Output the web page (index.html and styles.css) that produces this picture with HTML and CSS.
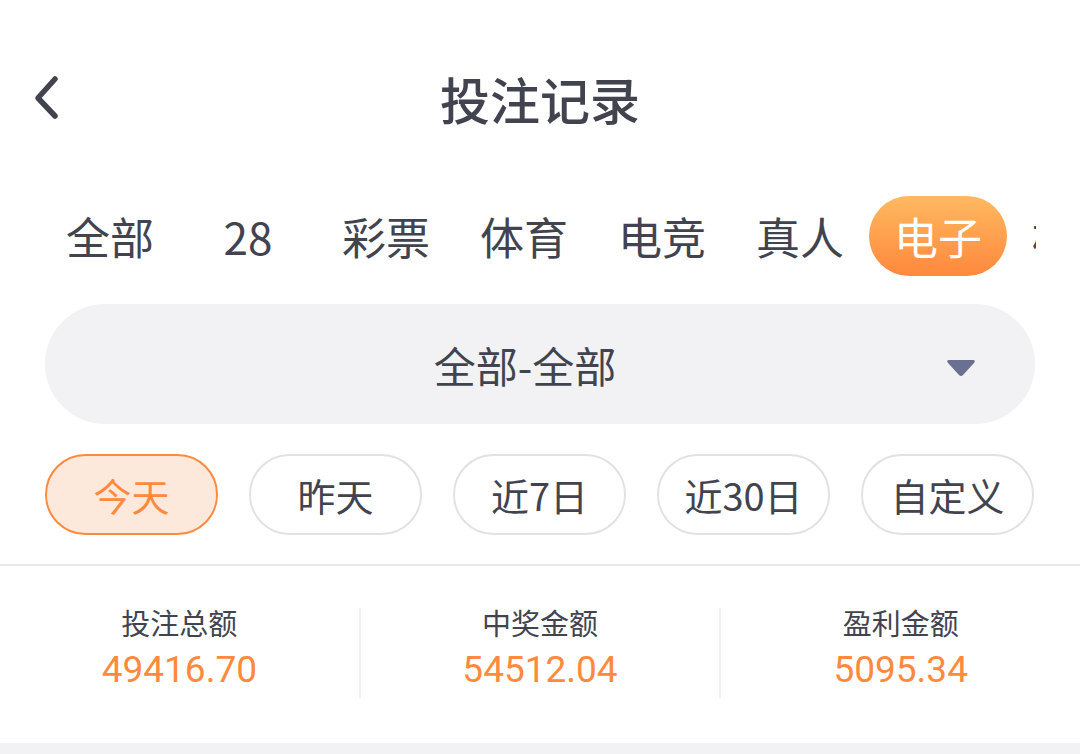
FILE: index.html
```html
<!DOCTYPE html>
<html lang="zh-CN">
<head>
    <meta charset="UTF-8">
    <title>投注记录</title>
    <link rel="stylesheet" href="styles.css">
</head>
<body>
    <!-- 顶部标题栏 -->
    <div class="header">
        <a class="back" href="#">
            <svg width="40" height="60" viewBox="0 0 40 60">
                <path d="M21 17 L4 36 L21 54" fill="none" stroke="#41444f" stroke-width="5.5" stroke-linecap="round" stroke-linejoin="round"/>
            </svg>
        </a>
        <h1 class="title">投注记录</h1>
    </div>

    <!-- 分类标签 -->
    <div class="tabs">
        <div class="tab">全部</div>
        <div class="tab">28</div>
        <div class="tab">彩票</div>
        <div class="tab">体育</div>
        <div class="tab">电竞</div>
        <div class="tab">真人</div>
        <div class="tab active">电子</div>
        <div class="tab">棋牌</div>
    </div>

    <!-- 下拉选择 -->
    <div class="select">
        <span class="select-text">全部-全部</span>
        <svg class="caret" width="32" height="22" viewBox="0 0 32 22">
            <path d="M4 3 H28 Q31 3 29 6 L18 18 Q16 20 14 18 L3 6 Q1 3 4 3 Z" fill="#6a7090"/>
        </svg>
    </div>

    <!-- 日期筛选 -->
    <div class="dates">
        <div class="chip active">今天</div>
        <div class="chip">昨天</div>
        <div class="chip">近7日</div>
        <div class="chip">近30日</div>
        <div class="chip">自定义</div>
    </div>

    <!-- 统计 -->
    <div class="stats">
        <div class="stat">
            <div class="stat-label">投注总额</div>
            <div class="stat-value">49416.70</div>
        </div>
        <div class="stat">
            <div class="stat-label">中奖金额</div>
            <div class="stat-value">54512.04</div>
        </div>
        <div class="stat">
            <div class="stat-label">盈利金额</div>
            <div class="stat-value">5095.34</div>
        </div>
    </div>
    <div class="list-bg"></div>
</body>
</html>
```

FILE: styles.css
```css
body {
    margin: 0;
    background: #fff;
    font-family: "Noto Sans CJK SC", "Noto Sans", sans-serif;
    color: #41444f;
    overflow: hidden;
}
.header {
    position: relative;
    height: 196px;
    display: flex;
    align-items: center;
    justify-content: center;
}
.back {
    position: absolute;
    left: 34px;
    top: 62px;
    display: block;
}
.title {
    margin: 0;
    font-size: 50px;
    font-weight: 500;
    color: #41444f;
    line-height: 1;
}
/* 分类标签 */
.tabs {
    display: flex;
    margin: 0 44px 0 41px;
    height: 80px;
    overflow: hidden;
}
.tab {
    flex: 0 0 138px;
    height: 80px;
    line-height: 80px;
    text-align: center;
    font-size: 44px;
    border-radius: 40px;
    color: #41444f;
}
.tab.active {
    background: linear-gradient(180deg, #ffb961, #ff883c);
    color: #fff;
}
/* 下拉选择 */
.select {
    position: relative;
    margin: 28px 45px 0;
    height: 120px;
    border-radius: 60px;
    background: #f2f2f5;
    display: flex;
    align-items: center;
    justify-content: center;
}
.select-text {
    font-size: 42px;
    color: #41444f;
    margin-right: 30px;
}
.caret {
    position: absolute;
    right: 58px;
    top: 53px;
}
/* 日期 */
.dates {
    display: flex;
    gap: 31px;
    margin: 30px 45px 0;
}
.chip {
    flex: 0 0 173px;
    box-sizing: border-box;
    height: 81px;
    line-height: 77px;
    border: 2px solid #e2e2e4;
    border-radius: 41px;
    text-align: center;
    font-size: 38px;
    color: #41444f;
}
.chip.active {
    border-color: #ff8a3d;
    background: #fde9dc;
    color: #ff8a3d;
}
/* 统计 */
.stats {
    display: flex;
    margin-top: 29px;
    border-top: 2px solid #e8e8ea;
    padding: 42px 0 45px;
}
.stat {
    flex: 1;
    height: 90px;
    text-align: center;
}
.stat + .stat {
    border-left: 2px solid #f1f1f3;
}
.stat-label {
    font-size: 29px;
    line-height: 28px;
    color: #41444f;
}
.stat-value {
    margin-top: 8px;
    font-family: Roboto, "Noto Sans", sans-serif;
    font-size: 37px;
    line-height: 52px;
    color: #ff8a3d;
}
.list-bg {
    height: 20px;
    background: #f2f2f5;
}
```
